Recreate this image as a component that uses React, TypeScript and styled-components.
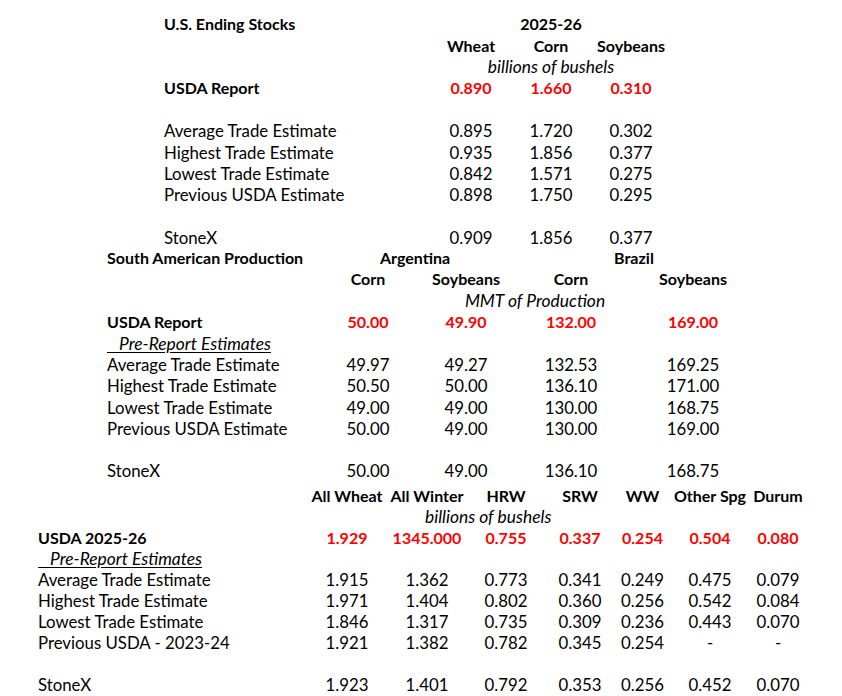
import React from 'react'
import styled, { createGlobalStyle } from 'styled-components'

const GlobalStyle = createGlobalStyle`
    html, body {
        margin: 0;
        padding: 0;
        background: #ffffff;
    }

    body {
        font-family: Lato, "Open Sans", "Liberation Sans", sans-serif;
        font-size: 16.8px;
        color: #000000;
    }
`

type Align = 'left' | 'center' | 'right'

type CellDef = {
    text: string
    col?: number
    span?: number
    align?: Align
    bold?: boolean
    italic?: boolean
    red?: boolean
    underline?: boolean
    indent?: number
    shift?: number
}

type RowDef = CellDef[]

const Sheet = styled.div`
    display: flex;
    flex-direction: column;
    padding-top: 14px;
    width: 842px;
`

const Section = styled.div<{ $cols: string; $left: number; $gap?: number; $rowH?: number }>`
    display: grid;
    grid-template-columns: ${p => p.$cols};
    grid-auto-rows: ${p => p.$rowH || 21.25}px;
    padding-left: ${p => p.$left}px;
    margin-top: ${p => p.$gap || 0}px;
`

const Cell = styled.div<{
    $col: number
    $span: number
    $align: Align
    $bold?: boolean
    $italic?: boolean
    $red?: boolean
    $underline?: boolean
    $indent?: number
    $shift?: number
}>`
    grid-column: ${p => p.$col} / span ${p => p.$span};
    align-self: center;
    display: flex;
    justify-content: ${p =>
        p.$align === 'center' ? 'center' : p.$align === 'right' ? 'flex-end' : 'flex-start'};
    padding-left: ${p => p.$indent || 0}px;
    padding-right: ${p => p.$shift || 0}px;
    line-height: 0.9;
    white-space: pre;
    font-size: ${p => (p.$bold ? '16px' : p.$italic ? '17.4px' : '16.8px')};
    font-weight: ${p => (p.$bold ? 700 : 400)};
    font-style: ${p => (p.$italic ? 'italic' : 'normal')};
    color: ${p => (p.$red ? '#ff0000' : '#000000')};
    text-decoration: ${p => (p.$underline ? 'underline' : 'none')};
    text-underline-offset: 2px;
`

const Blank = styled.div`
    grid-column: 1 / -1;
`

const values = (nums: string[], red?: boolean): CellDef[] =>
    nums.map((text, i) => ({ text, col: i + 2, align: 'center', red, bold: red }))

const label = (text: string, bold?: boolean): CellDef => ({ text, col: 1, bold })

const headers = (names: string[]): CellDef[] =>
    names.map((text, i) => ({ text, col: i + 2, align: 'center', bold: true }))

const preReport: CellDef = {
    text: '\u2003Pre-Report Estimates',
    col: 1,
    italic: true,
    underline: true,
}

const usStocks: RowDef[] = [
    [label('U.S. Ending Stocks', true), { text: '2025-26', col: 3, align: 'center', bold: true }],
    headers(['Wheat', 'Corn', 'Soybeans']),
    [{ text: 'billions of bushels', col: 2, span: 3, align: 'center', italic: true }],
    [label('USDA Report', true), ...values(['0.890', '1.660', '0.310'], true)],
    [],
    [label('Average Trade Estimate'), ...values(['0.895', '1.720', '0.302'])],
    [label('Highest Trade Estimate'), ...values(['0.935', '1.856', '0.377'])],
    [label('Lowest Trade Estimate'), ...values(['0.842', '1.571', '0.275'])],
    [label('Previous USDA Estimate'), ...values(['0.898', '1.750', '0.295'])],
    [],
    [label('StoneX'), ...values(['0.909', '1.856', '0.377'])],
]

const southAmerica: RowDef[] = [
    [
        label('South American Production', true),
        { text: 'Argentina', col: 2, span: 2, align: 'center', bold: true, shift: 6 },
        { text: 'Brazil', col: 4, span: 2, align: 'center', bold: true, shift: 8 },
    ],
    headers(['Corn', 'Soybeans', 'Corn', 'Soybeans']),
    [{ text: 'MMT of Production', col: 2, span: 4, align: 'center', italic: true, shift: 10 }],
    [label('USDA Report', true), ...values(['50.00', '49.90', '132.00', '169.00'], true)],
    [preReport],
    [label('Average Trade Estimate'), ...values(['49.97', '49.27', '132.53', '169.25'])],
    [label('Highest Trade Estimate'), ...values(['50.50', '50.00', '136.10', '171.00'])],
    [label('Lowest Trade Estimate'), ...values(['49.00', '49.00', '130.00', '168.75'])],
    [label('Previous USDA Estimate'), ...values(['50.00', '49.00', '130.00', '169.00'])],
    [],
    [label('StoneX'), ...values(['50.00', '49.00', '136.10', '168.75'])],
]

const wheatClasses: RowDef[] = [
    headers(['All Wheat', 'All Winter', 'HRW', 'SRW', 'WW', 'Other Spg', 'Durum']),
    [{ text: 'billions of bushels', col: 3, span: 3, align: 'left', italic: true, indent: 38 }],
    [
        label('USDA 2025-26', true),
        ...values(['1.929', '1345.000', '0.755', '0.337', '0.254', '0.504', '0.080'], true),
    ],
    [preReport],
    [
        label('Average Trade Estimate'),
        ...values(['1.915', '1.362', '0.773', '0.341', '0.249', '0.475', '0.079']),
    ],
    [
        label('Highest Trade Estimate'),
        ...values(['1.971', '1.404', '0.802', '0.360', '0.256', '0.542', '0.084']),
    ],
    [
        label('Lowest Trade Estimate'),
        ...values(['1.846', '1.317', '0.735', '0.309', '0.236', '0.443', '0.070']),
    ],
    [
        label('Previous USDA - 2023-24'),
        ...values(['1.921', '1.382', '0.782', '0.345', '0.254', '-', '-']),
    ],
    [],
    [label('StoneX'), ...values(['1.923', '1.401', '0.792', '0.353', '0.256', '0.452', '0.070'])],
]

type TableProps = {
    rows: RowDef[]
    cols: string
    left: number
    gap?: number
    rowH?: number
}

const Table = ({ rows, cols, left, gap, rowH }: TableProps) => (
    <Section $cols={cols} $left={left} $gap={gap} $rowH={rowH}>
        {rows.map((row, r) =>
            row.length === 0 ? (
                <Blank key={r} style={{ gridRow: r + 1 }} />
            ) : (
                row.map((c, i) => (
                    <Cell
                        key={`${r}-${i}`}
                        style={{ gridRow: r + 1 }}
                        $col={c.col || 1}
                        $span={c.span || 1}
                        $align={c.align || 'left'}
                        $bold={c.bold}
                        $italic={c.italic}
                        $red={c.red}
                        $underline={c.underline}
                        $indent={c.indent}
                        $shift={c.shift}
                    >
                        <span>{c.text}</span>
                    </Cell>
                ))
            )
        )}
    </Section>
)

export default function App() {
    return (
        <>
            <GlobalStyle />
            <Sheet>
                <Table rows={usStocks} cols="267px 80px 80px 80px" left={164} />
                <Table rows={southAmerica} cols="213px 96px 100px 110px 134px" left={107} />
                <Table
                    rows={wheatClasses}
                    cols="269px 80px 80px 78px 70px 55px 80px 56px"
                    left={38}
                    gap={4}
                    rowH={21}
                />
            </Sheet>
        </>
    )
}
